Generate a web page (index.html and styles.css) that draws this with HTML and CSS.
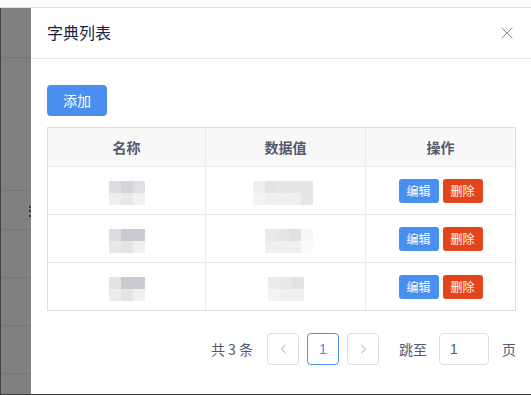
FILE: index.html
```html
<!DOCTYPE html>
<html lang="zh">
<head>
<meta charset="utf-8">
<link rel="stylesheet" href="styles.css">
</head>
<body>
<div class="page">
  <div class="topbar"></div>
  <div class="main">
    <div class="backdrop">
      <div class="bk-row h49"></div>
      <div class="bk-row h132"></div>
      <div class="bk-row h38"><span class="bk-mark"></span></div>
      <div class="bk-row h47"></div>
      <div class="bk-row h47"></div>
      <div class="bk-row h47"></div>
    </div>
    <div class="dialog">
      <div class="dlg-head">
        <span class="title">字典列表</span>
        <svg class="close" width="12" height="12" viewBox="0 0 12 12"><path d="M0.5 0.5 L11.5 11.5 M11.5 0.5 L0.5 11.5" stroke="#8a8a8a" stroke-width="1" fill="none"/></svg>
      </div>
      <div class="dlg-body">
        <button class="btn-add">添加</button>
        <div class="grid">
          <div class="th">名称</div>
          <div class="th">数据值</div>
          <div class="th">操作</div>

          <div class="td">
            <div class="mz mz3"><i class="ca"></i><i class="cb"></i><i class="cc"></i><i class="cd"></i><i class="ce"></i><i class="cf"></i></div>
          </div>
          <div class="td">
            <div class="mz mz5 shift"><i class="c1"></i><i class="c2"></i><i class="c3"></i><i class="c3"></i><i class="c3"></i><i class="c4"></i><i class="c5"></i><i class="c5"></i><i class="c6"></i><i class="c3"></i></div>
          </div>
          <div class="td ops"><button class="btn-edit">编辑</button><button class="btn-del">删除</button></div>

          <div class="td">
            <div class="mz mz3"><i class="ca"></i><i class="cg"></i><i class="cg"></i><i class="ce"></i><i class="ch"></i><i class="cf"></i></div>
          </div>
          <div class="td">
            <div class="mz mz4 shift2"><i class="c7"></i><i class="c8"></i><i class="cc"></i><i class="c9"></i><i class="c6"></i><i class="c5"></i><i class="c6"></i><i class="c10"></i></div>
          </div>
          <div class="td ops"><button class="btn-edit">编辑</button><button class="btn-del">删除</button></div>

          <div class="td last">
            <div class="mz mz3"><i class="ci"></i><i class="cg"></i><i class="cg"></i><i class="cj"></i><i class="ch"></i><i class="cf"></i></div>
          </div>
          <div class="td last">
            <div class="mz mz3"><i class="c11"></i><i class="ce"></i><i class="c2"></i><i class="c12"></i><i class="c6"></i><i class="c6"></i></div>
          </div>
          <div class="td ops last"><button class="btn-edit">编辑</button><button class="btn-del">删除</button></div>
        </div>

        <div class="pager">
          <span class="total">共 3 条</span>
          <span class="pbtn prev"><svg width="7" height="10" viewBox="0 0 7 10"><path d="M5.5 0.8 L1.5 5 L5.5 9.2" stroke="#c5c8ce" stroke-width="1.2" fill="none"/></svg></span>
          <span class="pbtn active">1</span>
          <span class="pbtn next"><svg width="7" height="10" viewBox="0 0 7 10"><path d="M1.5 0.8 L5.5 5 L1.5 9.2" stroke="#c5c8ce" stroke-width="1.2" fill="none"/></svg></span>
          <span class="jump">跳至</span>
          <span class="pinput">1</span>
          <span class="unit">页</span>
        </div>
      </div>
    </div>
  </div>
  <div class="bottomline"></div>
</div>
</body>
</html>
```

FILE: styles.css
```css
* { box-sizing: border-box; }
html, body { margin: 0; padding: 0; background: #fff; }
body {
  font-family: "Noto Sans CJK SC", "Noto Sans", "Liberation Sans", sans-serif;
  font-size: 14px;
  color: #515a6e;
}
.page { width: 531px; height: 395px; display: flex; flex-direction: column; overflow: hidden; }
.topbar { height: 8px; background: #fcfcfe; border-bottom: 1px solid #dedede; flex: none; }
.main { flex: 1; display: flex; min-height: 0; }
.bottomline { height: 1px; background: #3c3c3c; flex: none; }

.backdrop {
  width: 31px; flex: none; background: #808080;
  border-left: 1px solid #454545;
  display: flex; flex-direction: column;
}
.bk-row { border-bottom: 1px solid #767676; flex: none; display: flex; justify-content: flex-end; }
.h49 { height: 50px; }
.h132 { height: 133px; }
.h38 { height: 39px; }
.h47 { height: 48px; }
.bk-mark {
  width: 2px; height: 11px; margin-top: 15px;
  background: linear-gradient(#3a3a3a 0 2px, transparent 2px 4px, #3a3a3a 4px 6px, transparent 6px 9px, #3a3a3a 9px 11px);
}

.dialog { flex: 1; background: #fff; display: flex; flex-direction: column; }
.dlg-head {
  height: 51px; border-bottom: 1px solid #e8eaec;
  display: flex; align-items: center; justify-content: space-between;
  padding: 0 18px 2px 16px;
}
.title { font-size: 16px; color: #17233d; line-height: 19px; }
.close { display: block; margin-top: 1px; }

.dlg-body { padding: 26px 15px 0 16px; display: flex; flex-direction: column; align-items: flex-start; }
.btn-add {
  width: 60px; height: 31px; border: none; border-radius: 4px;
  background: #4a8ff0; color: #fff; font-family: inherit; font-size: 14px; padding: 0;
  line-height: 31px;
}
.grid {
  margin-top: 11px; width: 100%;
  display: grid; grid-template-columns: 158px 160px 1fr;
  border: 1px solid #dcdee2;
}
.th, .td { border-bottom: 1px solid #e8eaec; border-right: 1px solid #e8eaec; display: flex; align-items: center; justify-content: center; }
.grid > :nth-child(3n) { border-right: none; }
.th { height: 39px; background: #f8f8f9; font-weight: bold; color: #515a6e; font-size: 14px; }
.td { height: 48px; }
.td.last { height: 47px; border-bottom: none; }

.mz { display: grid; grid-auto-rows: 12px; margin-top: 4px; }
.mz i { display: block; }
.mz3 { grid-template-columns: repeat(3, 12px); }
.mz4 { grid-template-columns: repeat(4, 12px); }
.mz5 { grid-template-columns: repeat(5, 12px); }
.shift { margin-left: -6px; }
.shift2 { margin-left: 6px; }
.ca { background: #dcdce1; }
.cb { background: #d3d3d8; }
.cc { background: #e0e0e4; }
.cd { background: #eeeef0; }
.ce { background: #e8e8eb; }
.cf { background: #f1f1f3; }
.cg { background: #cacad0; }
.ch { background: #e4e4e7; }
.ci { background: #e2e2e5; }
.cj { background: #ececee; }
.c1 { background: #efeff1; }
.c2 { background: #e3e3e6; }
.c3 { background: #e6e6e9; }
.c4 { background: #f4f4f5; }
.c5 { background: #efeff1; }
.c6 { background: #f0f0f2; }
.c7 { background: #e9e9ec; }
.c8 { background: #e5e5e8; }
.c9 { background: #f6f7f7; }
.c10 { background: #f9fafa; }
.c11 { background: #ebebed; }
.c12 { background: #f3f3f4; }

.ops { gap: 4px; padding-top: 1px; }
.btn-edit, .btn-del {
  width: 40px; height: 24px; border: none; border-radius: 3px; padding: 0;
  color: #fff; font-family: inherit; font-size: 12px; line-height: 24px;
}
.btn-edit { background: #4a8ff0; }
.btn-del { background: #e2441b; }

.pager { align-self: stretch; margin-top: 22px; display: flex; justify-content: flex-end; align-items: center; color: #515a6e; font-size: 14px; }
.total { margin-right: 14px; word-spacing: 0; }
.pbtn {
  width: 32px; height: 32px; border: 1px solid #dcdee2; border-radius: 4px;
  display: flex; align-items: center; justify-content: center;
  font-family: "Liberation Sans", sans-serif; font-size: 14px; color: #515a6e;
}
.pbtn svg { display: block; }
.pbtn.active { border-color: #4a8ff0; color: #4a8ff0; margin: 0 8px 0 8px; }
.jump { margin-left: 20px; }
.pinput {
  width: 50px; height: 32px; border: 1px solid #dcdee2; border-radius: 4px;
  margin: 0 13px 0 12px; padding-left: 10px;
  display: flex; align-items: center;
  font-family: "Liberation Sans", sans-serif; color: #515a6e;
}
.unit { margin-right: 0; }
```
